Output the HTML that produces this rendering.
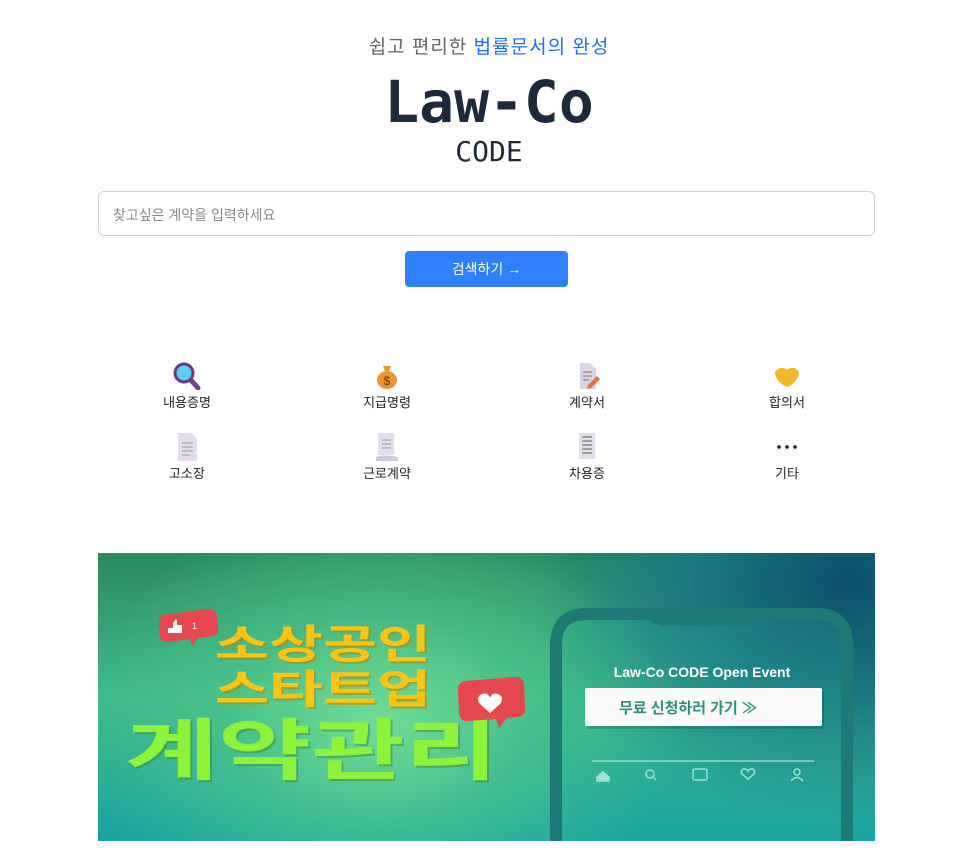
<!DOCTYPE html>
<html><head><meta charset="utf-8"><style>
*{margin:0;padding:0;box-sizing:border-box}
body{width:978px;height:863px;background:#fff;font-family:"Liberation Sans","Noto Sans CJK KR",sans-serif;position:relative;overflow:hidden}
.a{position:absolute}
.tag{left:0;width:978px;top:32px;text-align:center;font-size:19px;color:#666;letter-spacing:1px}
.tag span{color:#1d6cf5}
.logo{left:0;width:978px;top:66px;text-align:center;font-family:"DejaVu Sans Mono","Liberation Mono",monospace;font-weight:bold;font-size:58px;color:#1e293b;line-height:72px}
.code{left:0;width:978px;top:136px;text-align:center;font-family:"DejaVu Sans Mono","Liberation Mono",monospace;font-size:28px;color:#1e293b;line-height:32px}
.search{left:98px;top:191px;width:777px;height:45px;border:1px solid #d0d0d0;border-radius:6px;font-size:14px;color:#888;padding:13px 0 0 14px}
.btn{left:405px;top:251px;width:163px;height:36px;background:#2f80ff;border-radius:4px;color:#fff;font-size:14px;text-align:center;line-height:36px}
.it{width:120px;text-align:center;font-size:13px;color:#222}
.it svg{display:block;margin:0 auto 2px}
</style></head><body>
<div class="a tag">쉽고 편리한 <span>법률문서의 완성</span></div>
<div class="a logo">Law-Co</div>
<div class="a code">CODE</div>
<div class="a search">찾고싶은 계약을 입력하세요</div>
<div class="a btn">검색하기 →</div>

<div class="a it" style="left:127px;top:362px"><svg width="30" height="28" viewBox="0 0 30 28"><line x1="18" y1="17" x2="26" y2="26" stroke="#7a3f8a" stroke-width="5" stroke-linecap="round"/><circle cx="12" cy="11" r="9" fill="#5ccff0" stroke="#6b3a80" stroke-width="3"/></svg>내용증명</div>
<div class="a it" style="left:327px;top:362px"><svg width="30" height="28" viewBox="0 0 30 28"><ellipse cx="15" cy="18" rx="10" ry="9" fill="#e8962f"/><path d="M11 4 L19 4 L17 9 L13 9Z" fill="#e8962f"/><text x="15" y="23" font-size="12" text-anchor="middle" fill="#6b3a1a" font-family="Liberation Sans">$</text></svg>지급명령</div>
<div class="a it" style="left:527px;top:362px"><svg width="30" height="28" viewBox="0 0 30 28"><path d="M8 1h10l6 6v20H8z" fill="#dcd4e6"/><path d="M11 10h9M11 14h9M11 18h6" stroke="#999" stroke-width="1.5"/><path d="M16 23l9-9 3 3-9 9-4 1z" fill="#f06a3c"/></svg>계약서</div>
<div class="a it" style="left:727px;top:362px"><svg width="30" height="28" viewBox="0 0 30 28"><path d="M3 10 Q8 3 15 8 Q22 3 27 10 Q27 18 18 24 Q14 26 10 22 Q3 17 3 10Z" fill="#f5b72a"/></svg>합의서</div>

<div class="a it" style="left:127px;top:433px"><svg width="30" height="28" viewBox="0 0 30 28"><path d="M6 0h13l6 6v22H6z" fill="#e2dcec"/><path d="M10 10h11M10 14h11M10 18h11M10 22h8" stroke="#aaa" stroke-width="1.2"/></svg>고소장</div>
<div class="a it" style="left:327px;top:433px"><svg width="30" height="28" viewBox="0 0 30 28"><path d="M6 0h16v22H6z" fill="#e2dcec"/><path d="M4 24q6-3 22 0v4H4z" fill="#cfc6e0"/><path d="M10 7h9M10 11h9M10 15h9" stroke="#aaa" stroke-width="1.2"/></svg>근로계약</div>
<div class="a it" style="left:527px;top:433px"><svg width="30" height="28" viewBox="0 0 30 28"><path d="M7 0h16v26H7z" fill="#e2dcec"/><path d="M10 4h10M10 8h10M10 12h10M10 16h10M10 20h10" stroke="#888" stroke-width="1.4"/></svg>차용증</div>
<div class="a it" style="left:727px;top:433px"><svg width="30" height="28" viewBox="0 0 30 28"><circle cx="7" cy="14" r="1.8" fill="#222"/><circle cx="15" cy="14" r="1.8" fill="#222"/><circle cx="23" cy="14" r="1.8" fill="#222"/></svg>기타</div>

<div class="a" style="left:98px;top:553px;width:777px;height:288px;overflow:hidden;background:radial-gradient(ellipse 300px 220px at 280px 170px,#6fdc95 0%,rgba(80,200,140,0.6) 50%,transparent 100%),radial-gradient(ellipse 400px 300px at 750px 30px,#0b4f6b 0%,#1c7a80 40%,transparent 80%),linear-gradient(180deg,#2a8a5e 0%,#3fb98a 50%,#18a3a0 100%)">
<svg width="777" height="288" viewBox="0 0 777 288" style="position:absolute;left:0;top:0">
<path d="M458 288 V92 Q458 61 489 61 H718 Q749 61 749 92 V288" fill="rgba(40,170,150,0.25)" stroke="#1f7a76" stroke-width="12"/>
<path d="M550 61 H662 Q660 73 645 73 H567 Q552 73 550 61Z" fill="#1f7a76"/>
<text x="604" y="124" font-size="14" font-weight="bold" fill="#fff" text-anchor="middle" font-family="Liberation Sans">Law-Co CODE Open Event</text>
<rect x="489" y="138" width="237" height="38" rx="2" fill="#000" opacity="0.15"/>
<rect x="487" y="135" width="237" height="38" rx="2" fill="#fafafa"/>
<text x="590" y="160" font-size="15" font-weight="bold" fill="#2a8f7c" text-anchor="middle" font-family="Liberation Sans,Noto Sans CJK KR,sans-serif">무료 신청하러 가기 ≫</text>
<line x1="494" y1="208" x2="716" y2="208" stroke="#8fd8c4" stroke-width="1.5"/>
<g fill="none" stroke="#9fe0cf" stroke-width="1.5"><path d="M499 224l6-5 6 5v4h-12z" fill="#9fe0cf"/><circle cx="552" cy="221" r="4"/><line x1="555" y1="224" x2="558" y2="227"/><rect x="595" y="216" width="14" height="11" rx="2"/><path d="M650 226 l-6-5 q-2-4 2-5 q3 0 4 2 q1-2 4-2 q4 1 2 5z"/><circle cx="699" cy="219" r="3"/><path d="M693 228q6-7 12 0"/></g>
<path d="M64 62 l46-6 q8-1 9 7 l1 12 q1 7-6 8 l-14 2 -6 8 -2-7 -22 3 q-7 1-8-6 l-1-12 q0-8 3-9z" fill="#e5464f"/>
<path d="M70 75h5v-5l3-4 1 1v5h5v8h-14z" fill="#fff"/>
<text x="94" y="76" font-size="9" fill="#fff" font-family="Liberation Sans">1</text>
<g font-family="Noto Sans CJK KR,sans-serif" font-weight="bold">
<text x="119" y="107" font-size="40" textLength="216" lengthAdjust="spacingAndGlyphs" fill="#b8860b" opacity="0.6">소상공인</text>
<text x="117" y="105" font-size="40" textLength="216" lengthAdjust="spacingAndGlyphs" fill="#f9c514">소상공인</text>
<text x="119" y="152" font-size="40" textLength="216" lengthAdjust="spacingAndGlyphs" fill="#b8860b" opacity="0.6">스타트업</text>
<text x="117" y="150" font-size="40" textLength="216" lengthAdjust="spacingAndGlyphs" fill="#f9c514">스타트업</text>
<text x="29" y="223" font-size="67" textLength="373" lengthAdjust="spacingAndGlyphs" fill="#3e8a3a" opacity="0.5">계약관리</text>
<text x="27" y="221" font-size="67" textLength="373" lengthAdjust="spacingAndGlyphs" fill="#8ef23a">계약관리</text>
</g>
<path d="M368 128 l48-4 q9-1 10 8 l1 22 q1 9-8 10 l-10 1 -8 10 -3-9 -28 2 q-8 1-9-8 l-1-22 q-1-9 8-10z" fill="#e5464f"/>
<path d="M392 160 l-10-9 q-5-7 2-10 q6-2 8 4 q2-6 8-4 q7 3 2 10z" fill="#fff"/>
</svg></div>
</body></html>
